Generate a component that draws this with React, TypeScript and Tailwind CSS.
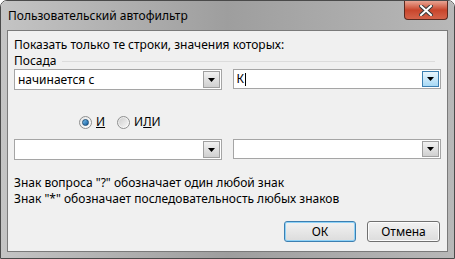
import React from "react";

function Arrow({ focused }: { focused?: boolean }) {
  return (
    <div
      className={
        "w-[17px] h-full flex items-center justify-center border " +
        (focused
          ? "border-[#3c7fb1] bg-gradient-to-b from-[#eaf6fd] to-[#a7d9f5]"
          : "border-[#a0a0a0] bg-gradient-to-b from-[#f2f2f2] to-[#d0d0d0]")
      }
    >
      <svg width="7" height="4" viewBox="0 0 7 4">
        <path d="M0 0H7L3.5 4Z" fill="#000" />
      </svg>
    </div>
  );
}

function Combo({ value, focused, w, h = 21 }: { value?: string; focused?: boolean; w: string; h?: number }) {
  return (
    <div
      className={"flex items-stretch bg-white border border-[#a5a5a5] p-[1px] " + w}
      style={{ height: h }}
    >
      <div className="flex-1 flex items-center pl-[2px] text-[12px] text-black">
        {value}
        {focused && <span className="inline-block w-px h-[13px] bg-black ml-[1px]" />}
      </div>
      <Arrow focused={focused} />
    </div>
  );
}

function Radio({ checked, label }: { checked?: boolean; label: React.ReactNode }) {
  return (
    <div className="flex items-center gap-[4px]">
      <div className="w-[13px] h-[13px] rounded-full border border-[#8e8f8f] bg-gradient-to-br from-[#e6e6e6] to-[#ffffff] flex items-center justify-center">
        {checked ? (
          <div className="w-[7px] h-[7px] rounded-full bg-gradient-to-br from-[#7bc3ef] to-[#0a5a9c] border border-[#1f4f78]" />
        ) : (
          <div className="w-[9px] h-[9px] rounded-full bg-gradient-to-br from-[#cfcfcf] to-[#f6f6f6]" />
        )}
      </div>
      <span className="text-[12px] text-black">{label}</span>
    </div>
  );
}

export default function App() {
  return (
    <div
      className="w-[455px] h-[259px] flex flex-col rounded-t-[7px] border border-[#4a4a4a] overflow-hidden"
      style={{ fontFamily: '"Noto Sans", "Open Sans", sans-serif' }}
    >
      <div className="flex-1 flex flex-col bg-gradient-to-r from-[#c4c4c4] via-[#9e9e9e] to-[#b8b8b8]">
        <div className="h-[29px] flex items-start relative">
          <div className="pl-[7px] pt-[7px] text-[12px] text-black leading-[16px]">Пользовательский автофильтр</div>
          <div className="absolute right-[6px] top-0 w-[44px] h-[19px] rounded-b-[4px] border border-[#5a2a20] border-t-0 bg-gradient-to-b from-[#e8a493] via-[#c8452b] to-[#d4634a] flex items-center justify-center">
            <svg width="14" height="11" viewBox="0 0 14 11">
              <path d="M2 1L12 10M12 1L2 10" stroke="#3a3a3a" strokeWidth="4" strokeLinecap="square" />
              <path d="M2 1L12 10M12 1L2 10" stroke="#ffffff" strokeWidth="2" strokeLinecap="square" />
            </svg>
          </div>
        </div>
        <div className="mx-[6px] mb-[6px] flex-1 bg-[#f0f0f0] border border-[#7a7a7a] flex flex-col pl-[6px] pr-[6px]">
          <div className="mt-[6px] text-[12px] leading-[16px] text-black">Показать только те строки, значения которых:</div>
          <div className="flex items-center">
            <span className="text-[12px] leading-[16px] text-black">Посада</span>
            <div className="flex-1 h-px bg-[#dcdcdc] ml-[6px] mr-[6px]" />
          </div>
          <div className="flex mt-[0px] gap-[11px]">
            <Combo value="начинается с" w="w-[208px]" />
            <Combo value="К" focused w="w-[209px]" h={20} />
          </div>
          <div className="flex gap-[12px] mt-[24px] ml-[65px] h-[16px]">
            <Radio checked label={<span className="underline">И</span>} />
            <Radio label={<span>И<span className="underline">Л</span>И</span>} />
          </div>
          <div className="flex mt-[9px] gap-[11px]">
            <Combo w="w-[208px]" />
            <Combo w="w-[209px]" h={20} />
          </div>
          <div className="mt-[15px] text-[12px] leading-[16px] text-black">Знак вопроса "?" обозначает один любой знак</div>
          <div className="text-[12px] leading-[16px] text-black">Знак "*" обозначает последовательность любых знаков</div>
          <div className="flex justify-end gap-[11px] mt-[14px] mr-[1px]">
            <button className="w-[72px] h-[21px] rounded-[3px] border border-[#3c7fb1] bg-gradient-to-b from-[#f2f2f2] to-[#dcdcdc] text-[12px] text-black shadow-[inset_0_0_0_1px_#8fd2f7]">ОК</button>
            <button className="w-[73px] h-[21px] rounded-[3px] border border-[#707070] bg-gradient-to-b from-[#f2f2f2] to-[#dcdcdc] text-[12px] text-black shadow-[inset_0_0_0_1px_#fcfcfc]">Отмена</button>
          </div>
        </div>
      </div>
    </div>
  );
}
